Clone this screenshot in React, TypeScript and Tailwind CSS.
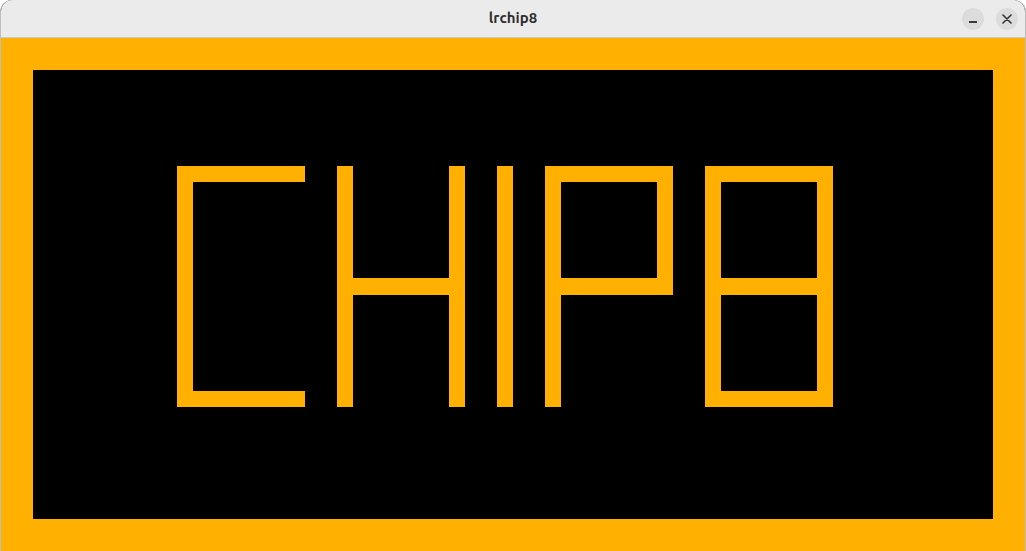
import React from "react";

// CHIP-8 framebuffer: 64 x 32, 1 = lit
const COLS = 64;
const ROWS = 32;

function buildFrame(): boolean[] {
  const fb = new Array(COLS * ROWS).fill(false);
  const set = (x: number, y: number) => {
    fb[y * COLS + x] = true;
  };
  const hline = (x0: number, x1: number, y: number) => {
    for (let x = x0; x <= x1; x++) set(x, y);
  };
  const vline = (x: number, y0: number, y1: number) => {
    for (let y = y0; y <= y1; y++) set(x, y);
  };

  // border, two pixels thick
  for (let y = 0; y < ROWS; y++) {
    for (let x = 0; x < COLS; x++) {
      if (x < 2 || x > 61 || y < 2 || y > 29) set(x, y);
    }
  }

  // C
  vline(11, 8, 22);
  hline(11, 18, 8);
  hline(11, 18, 22);
  // H
  vline(21, 8, 22);
  vline(28, 8, 22);
  hline(21, 28, 15);
  // I
  vline(31, 8, 22);
  // P
  vline(34, 8, 22);
  vline(41, 8, 15);
  hline(34, 41, 8);
  hline(34, 41, 15);
  // 8
  vline(44, 8, 22);
  vline(51, 8, 22);
  hline(44, 51, 8);
  hline(44, 51, 15);
  hline(44, 51, 22);

  return fb;
}

const frame = buildFrame();

const TitleBar: React.FC = () => (
  <div className="relative flex h-[38px] items-center justify-center border-b border-[#c9c9c9] bg-[#ebebeb]">
    <span className="text-[15px] font-bold text-[#2e2e2e] [font-family:Ubuntu,'Noto_Sans','Open_Sans',sans-serif]">
      lrchip8
    </span>
    <div className="absolute right-[7px] top-[8px] flex gap-[12px]">
      <button
        className="flex h-[22px] w-[22px] items-center justify-center rounded-full bg-[#dcdcdc]"
        aria-label="Minimize"
      >
        <span className="mt-[6px] block h-[1.5px] w-[8px] bg-[#3a3a3a]" />
      </button>
      <button
        className="flex h-[22px] w-[22px] items-center justify-center rounded-full bg-[#dcdcdc]"
        aria-label="Close"
      >
        <svg width="10" height="10" viewBox="0 0 10 10">
          <path
            d="M1 1 L9 9 M9 1 L1 9"
            stroke="#333"
            strokeWidth="1.6"
            strokeLinecap="round"
          />
        </svg>
      </button>
    </div>
  </div>
);

export default function App() {
  return (
    <div className="h-[551px] w-[1026px] overflow-hidden rounded-t-[12px] border-x border-[#bdbdbd] bg-black">
      <TitleBar />
      <div className="grid h-[513px] grid-cols-[repeat(64,1fr)] grid-rows-[repeat(32,1fr)]">
        {frame.map((on, i) => (
          <div key={i} className={on ? "bg-[#ffb000]" : "bg-black"} />
        ))}
      </div>
    </div>
  );
}
